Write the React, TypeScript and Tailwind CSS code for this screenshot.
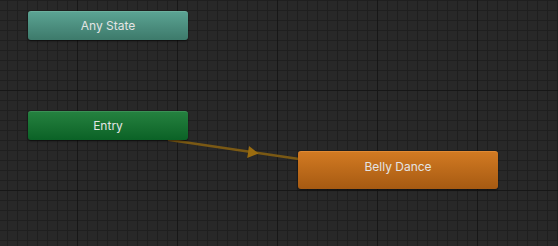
import React from "react";

function StateNode({
  label,
  className,
}: {
  label: string;
  className: string;
}) {
  return (
    <div
      className={`absolute flex items-center justify-center rounded-[3px] text-[12px] text-[#e4e4e4] shadow-[0_1px_2px_rgba(0,0,0,0.6)] [font-family:Inter,'Noto_Sans',sans-serif] ${className}`}
    >
      {label}
    </div>
  );
}

export default function App() {
  return (
    <div className="relative h-[246px] w-[558px] overflow-hidden bg-[#282828] [background-image:linear-gradient(to_right,#171717_1px,transparent_1px),linear-gradient(to_bottom,#171717_1px,transparent_1px),linear-gradient(to_right,#1f1f1f_1px,transparent_1px),linear-gradient(to_bottom,#1f1f1f_1px,transparent_1px)] [background-size:100px_100px,100px_100px,10px_10px,10px_10px] [background-position:77px_0,0_90px,7px_0,0_0]">
      <svg
        className="absolute left-0 top-0"
        width="558"
        height="246"
        viewBox="0 0 558 246"
      >
        <line
          x1="168"
          y1="139.7"
          x2="299"
          y2="159"
          stroke="#7a5914"
          strokeWidth="2.5"
        />
        <polygon points="249,146 258.5,153.4 247.2,158" fill="#9a6c10" />
      </svg>

      <StateNode
        label="Any State"
        className="left-[28px] top-[11px] h-[29px] w-[160px] border-t border-[#6cb09e] bg-gradient-to-b from-[#5ba393] to-[#3d7a6b]"
      />
      <StateNode
        label="Entry"
        className="left-[28px] top-[111px] h-[29px] w-[160px] border-t border-[#3a9055] bg-gradient-to-b from-[#24813f] to-[#0a6226]"
      />
      <StateNode
        label="Belly Dance"
        className="left-[298px] top-[151px] h-[38px] w-[200px] pb-[8px] border-t border-[#e08a34] bg-gradient-to-b from-[#d27a22] to-[#a65a12]"
      />
    </div>
  );
}
